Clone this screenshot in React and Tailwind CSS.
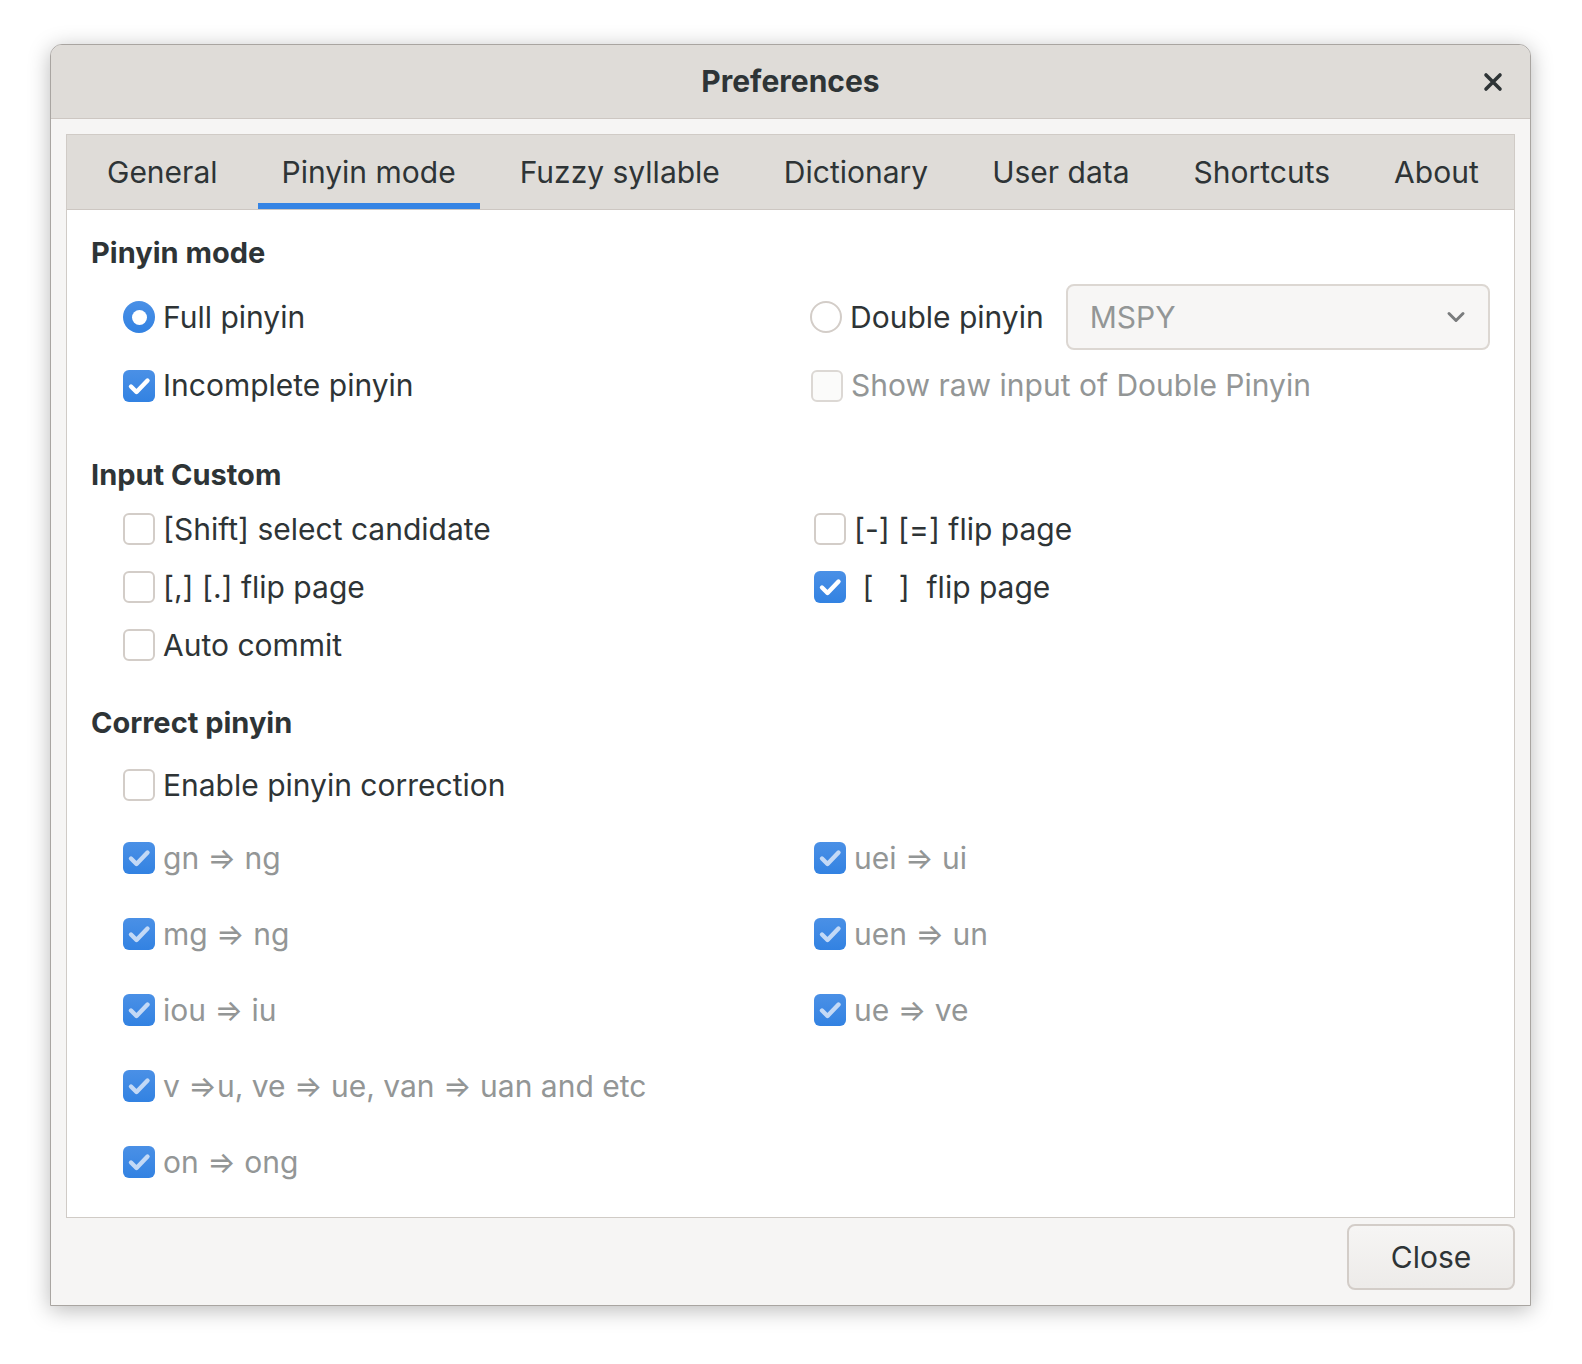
import React from "react";

const FONT = { fontFamily: "Inter, 'Noto Sans', sans-serif" };

function CheckIcon({ color }) {
    return (
        <svg width="32" height="32" viewBox="0 0 32 32" fill="none">
            <path d="M8 16.5 L13.5 22 L24.5 10.5" stroke={color} strokeWidth="4.4" strokeLinecap="round" strokeLinejoin="round" />
        </svg>
    );
}

function Checkbox({ checked, disabled }) {
    if (checked) {
        return (
            <span className="flex h-8 w-8 shrink-0 items-center justify-center rounded-[6px] bg-gradient-to-b from-[#4a90e6] to-[#3282e2]">
                <CheckIcon color={disabled ? "#c3d9f6" : "#ffffff"} />
            </span>
        );
    }
    return (
        <span
            className={
                disabled
                    ? "h-8 w-8 shrink-0 rounded-[6px] border-2 border-[#dcd8d4] bg-[#fbfbfa]"
                    : "h-8 w-8 shrink-0 rounded-[6px] border-2 border-[#d3cdc8] bg-white"
            }
        />
    );
}

function Radio({ checked }) {
    if (checked) {
        return (
            <span className="flex h-8 w-8 shrink-0 items-center justify-center rounded-full bg-gradient-to-b from-[#4a90e6] to-[#3282e2]">
                <span className="h-[15px] w-[15px] rounded-full bg-white" />
            </span>
        );
    }
    return <span className="h-8 w-8 shrink-0 rounded-full border-2 border-[#d3cdc8] bg-white" />;
}

function Option({ checked, disabled, label, className = "" }) {
    return (
        <div className={"flex items-center gap-2 " + className}>
            <Checkbox checked={checked} disabled={disabled} />
            <span className={"whitespace-pre " + (disabled ? "text-[#939696]" : "text-[#2e3436]")}>{label}</span>
        </div>
    );
}

const tabs = ["General", "Pinyin mode", "Fuzzy syllable", "Dictionary", "User data", "Shortcuts", "About"];

export default function App() {
    return (
        <div className="h-[1364px] w-[1582px] bg-white pl-[50px] pt-[44px]" style={FONT}>
            <div className="flex h-[1262px] w-[1481px] flex-col overflow-hidden rounded-t-[12px] border border-[#a9a5a1] bg-[#f6f5f4] shadow-[0_4px_22px_rgba(0,0,0,0.28)]">
                {/* Title bar */}
                <div className="relative flex h-[74px] shrink-0 items-center justify-center border-b border-[#cdc7c2] bg-[#dfdcd8]">
                    <span className="text-[30px] font-bold text-[#2e3436]">Preferences</span>
                    <button className="absolute right-[26px] top-[26px] flex h-[22px] w-[22px] items-center justify-center">
                        <svg width="20" height="20" viewBox="0 0 20 20">
                            <path d="M3 3 L17 17 M17 3 L3 17" stroke="#2e3436" strokeWidth="3.6" strokeLinecap="round" />
                        </svg>
                    </button>
                </div>

                {/* Body */}
                <div className="flex flex-1 flex-col px-[15px] pt-[15px] pb-[15px]">
                    <div className="flex flex-1 flex-col border border-[#d0cbc6] bg-white">
                        {/* Tabs */}
                        <div className="flex h-[75px] shrink-0 items-stretch border-b border-[#cdc7c2] bg-[#dfdcd8] pl-[8px]">
                            {tabs.map((t) => (
                                <div
                                    key={t}
                                    className={
                                        "mx-[8px] flex items-center border-b-[6px] px-[24px] pt-[6px] text-[30px] text-[#2e3436] " +
                                        (t === "Pinyin mode" ? "border-[#3584e4]" : "border-transparent")
                                    }
                                >
                                    {t}
                                </div>
                            ))}
                        </div>

                        {/* Page */}
                        <div className="flex flex-col px-[24px] pt-[26px] text-[30px]">
                            <div className="flex h-[34px] items-center text-[29px] font-bold text-[#2e3436]">Pinyin mode</div>

                            <div className="mt-[14px] grid h-[66px] grid-cols-[719px_1fr] items-center">
                                <div className="flex items-center gap-2 pl-[32px]">
                                    <Radio checked />
                                    <span className="text-[#2e3436]">Full pinyin</span>
                                </div>
                                <div className="flex items-center">
                                    <div className="flex items-center gap-2">
                                        <Radio />
                                        <span className="text-[#2e3436]">Double pinyin</span>
                                    </div>
                                    <div className="ml-[22px] flex h-[66px] flex-1 items-center justify-between rounded-[8px] border-2 border-[#dcd7d2] bg-[#f7f6f5] pl-[22px] pr-[22px]">
                                        <span className="text-[#939696]">MSPY</span>
                                        <svg width="20" height="12" viewBox="0 0 20 12">
                                            <path d="M3 2.5 L10 9.5 L17 2.5" stroke="#7a7c7d" strokeWidth="3" fill="none" strokeLinecap="round" strokeLinejoin="round" />
                                        </svg>
                                    </div>
                                </div>
                            </div>

                            <div className="mt-[13px] grid h-[36px] grid-cols-[719px_1fr] items-center">
                                <Option checked label="Incomplete pinyin" className="pl-[32px]" />
                                <Option disabled label="Show raw input of Double Pinyin" className="pl-[1px]" />
                            </div>

                            <div className="mt-[59px] flex h-[34px] items-center text-[29px] font-bold text-[#2e3436]">Input Custom</div>

                            <div className="mt-[8px] grid grid-cols-[719px_1fr] auto-rows-[58px] items-center">
                                <Option label="[Shift] select candidate" className="pl-[32px]" />
                                <Option label="[-] [=] flip page" className="pl-[4px]" />
                                <Option label="[,] [.] flip page" className="pl-[32px]" />
                                <Option checked label=" [   ]  flip page" className="pl-[4px]" />
                                <Option label="Auto commit" className="pl-[32px]" />
                            </div>

                            <div className="mt-[32px] flex h-[34px] items-center text-[29px] font-bold text-[#2e3436]">Correct pinyin</div>

                            <div className="mt-[16px] flex h-[58px] items-center">
                                <Option label="Enable pinyin correction" className="pl-[32px]" />
                            </div>

                            <div className="mt-[6px] grid grid-cols-[719px_1fr] auto-rows-[76px] items-center pb-[16px]">
                                <Option checked disabled label="gn ⇒ ng" className="pl-[32px]" />
                                <Option checked disabled label="uei ⇒ ui" className="pl-[4px]" />
                                <Option checked disabled label="mg ⇒ ng" className="pl-[32px]" />
                                <Option checked disabled label="uen ⇒ un" className="pl-[4px]" />
                                <Option checked disabled label="iou ⇒ iu" className="pl-[32px]" />
                                <Option checked disabled label="ue ⇒ ve" className="pl-[4px]" />
                                <Option checked disabled label="v ⇒u, ve ⇒ ue, van ⇒ uan and etc" className="col-span-2 pl-[32px]" />
                                <Option checked disabled label="on ⇒ ong" className="pl-[32px]" />
                            </div>
                        </div>
                    </div>

                    <div className="mt-[6px] flex justify-end">
                        <button className="h-[66px] w-[168px] rounded-[8px] border-2 border-[#d3cdc8] bg-gradient-to-b from-[#f6f5f4] to-[#edebe9] text-[30px] text-[#2e3436]">
                            Close
                        </button>
                    </div>
                </div>
            </div>
        </div>
    );
}
